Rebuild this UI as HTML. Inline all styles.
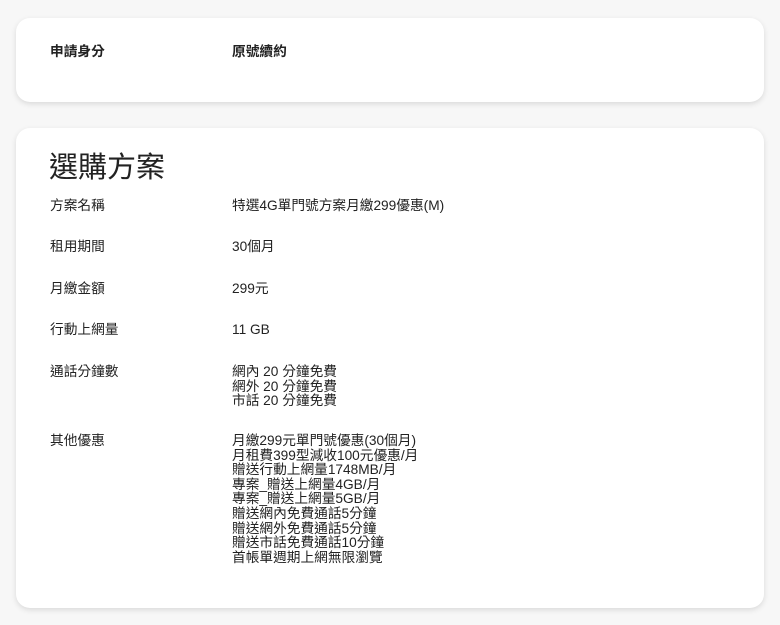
<!DOCTYPE html>
<html><head><meta charset="utf-8"><style>
body{margin:0;background:#f7f7f7;width:780px;height:625px;position:relative;font-family:"Liberation Sans","Noto Sans CJK TC",sans-serif;color:#222;overflow:hidden}
.card{position:absolute;left:16px;width:748px;background:#fff;border-radius:14px;box-shadow:0 2px 6px rgba(0,0,0,0.12)}
.t{position:absolute;font-size:13.7px;line-height:14.6px;white-space:nowrap}
.b{font-weight:bold}
</style></head><body>
<div class="card" style="top:18px;height:84px"></div>
<div class="card" style="top:128px;height:480px"></div>
<div class="t b" style="left:50px;top:45px">申請身分</div>
<div class="t b" style="left:232px;top:45px">原號續約</div>
<div class="t" style="left:49px;top:151px;font-size:29px;line-height:34px">選購方案</div>
<div class="t" style="left:50px;top:199px">方案名稱</div>
<div class="t" style="left:232px;top:199px">特選4G單門號方案月繳299優惠(M)</div>
<div class="t" style="left:50px;top:240px">租用期間</div>
<div class="t" style="left:232px;top:240px">30個月</div>
<div class="t" style="left:50px;top:282px">月繳金額</div>
<div class="t" style="left:232px;top:282px">299元</div>
<div class="t" style="left:50px;top:323px">行動上網量</div>
<div class="t" style="left:232px;top:323px">11 GB</div>
<div class="t" style="left:50px;top:365px">通話分鐘數</div>
<div class="t" style="left:232px;top:365px">網內 20 分鐘免費<br>網外 20 分鐘免費<br>市話 20 分鐘免費</div>
<div class="t" style="left:50px;top:434px">其他優惠</div>
<div class="t" style="left:232px;top:434px">月繳299元單門號優惠(30個月)<br>月租費399型減收100元優惠/月<br>贈送行動上網量1748MB/月<br>專案_贈送上網量4GB/月<br>專案_贈送上網量5GB/月<br>贈送網內免費通話5分鐘<br>贈送網外免費通話5分鐘<br>贈送市話免費通話10分鐘<br>首帳單週期上網無限瀏覽</div>
</body></html>
